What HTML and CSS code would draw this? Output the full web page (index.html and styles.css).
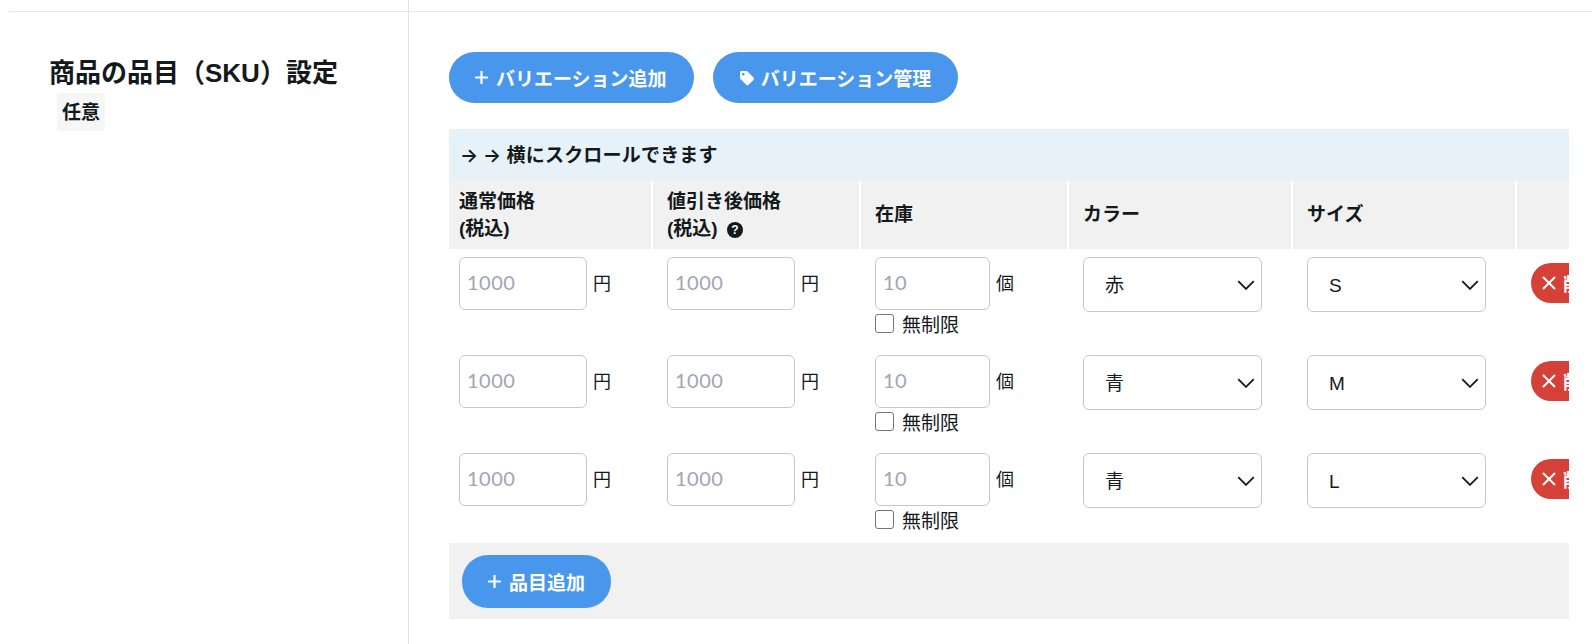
FILE: index.html
```html
<!DOCTYPE html>
<html lang="ja">
<head>
<meta charset="utf-8">
<title>商品の品目（SKU）設定</title>
<link rel="stylesheet" href="styles.css">
</head>
<body>
<div class="section section-prev"><div class="side"></div><div class="main"></div></div>
<section class="section">
  <div class="side">
    <h2 class="title">商品の品目（SKU）設定</h2>
    <span class="tag">任意</span>
  </div>
  <div class="main">
    <div class="actions">
      <button class="pill" type="button"><svg class="ico-plus" viewBox="0 0 12 12"><path d="M6 0v12M0 6h12"/></svg>バリエーション追加</button>
      <button class="pill" type="button"><svg class="ico-tag" viewBox="0 0 16 16"><path d="M1 2.4C1 1.6 1.6 1 2.4 1h4.9c.5 0 .9.2 1.2.5l6 6c.7.7.7 1.7 0 2.4l-4.9 4.900c-.7.7-1.700.7-2.400 0l-6-6C1.200 8.500 1 8.100 1 7.600zM4.300 3a1.300 1.300 0 1 0 0 2.600 1.300 1.300 0 0 0 0-2.600z"/></svg>バリエーション管理</button>
    </div>
    <div class="sku-box">
      <div class="hint"><span class="arrows">→ →</span> 横にスクロールできます</div>
      <div class="scroller">
        <table class="sku">
          <colgroup><col class="c1"><col class="c2"><col class="c3"><col class="c4"><col class="c5"><col class="c6"></colgroup>
          <thead>
            <tr>
              <th>通常価格<br>(税込)</th>
              <th>値引き後価格<br>(税込) <span class="q">?</span></th>
              <th class="single">在庫</th>
              <th class="single">カラー</th>
              <th class="single">サイズ</th>
              <th></th>
            </tr>
          </thead>
          <tbody>
            <tr>
              <td><div class="field"><input class="num" type="text" placeholder="1000"><span class="unit">円</span></div></td>
              <td><div class="field"><input class="num" type="text" placeholder="1000"><span class="unit">円</span></div></td>
              <td><div class="field"><input class="num stock" type="text" placeholder="10"><span class="unit">個</span></div><label class="check"><input type="checkbox">無制限</label></td>
              <td><div class="sel"><select><option>赤</option><option>青</option></select><svg viewBox="0 0 16 9"><path d="M1 1l7 7 7-7"/></svg></div></td>
              <td><div class="sel"><select><option>S</option><option>M</option><option>L</option></select><svg viewBox="0 0 16 9"><path d="M1 1l7 7 7-7"/></svg></div></td>
              <td><button class="del" type="button"><svg viewBox="0 0 14 14"><path d="M1 1l12 12M13 1L1 13"/></svg>削除</button></td>
            </tr>
            <tr>
              <td><div class="field"><input class="num" type="text" placeholder="1000"><span class="unit">円</span></div></td>
              <td><div class="field"><input class="num" type="text" placeholder="1000"><span class="unit">円</span></div></td>
              <td><div class="field"><input class="num stock" type="text" placeholder="10"><span class="unit">個</span></div><label class="check"><input type="checkbox">無制限</label></td>
              <td><div class="sel"><select><option>青</option><option>赤</option></select><svg viewBox="0 0 16 9"><path d="M1 1l7 7 7-7"/></svg></div></td>
              <td><div class="sel"><select><option>M</option><option>S</option><option>L</option></select><svg viewBox="0 0 16 9"><path d="M1 1l7 7 7-7"/></svg></div></td>
              <td><button class="del" type="button"><svg viewBox="0 0 14 14"><path d="M1 1l12 12M13 1L1 13"/></svg>削除</button></td>
            </tr>
            <tr>
              <td><div class="field"><input class="num" type="text" placeholder="1000"><span class="unit">円</span></div></td>
              <td><div class="field"><input class="num" type="text" placeholder="1000"><span class="unit">円</span></div></td>
              <td><div class="field"><input class="num stock" type="text" placeholder="10"><span class="unit">個</span></div><label class="check"><input type="checkbox">無制限</label></td>
              <td><div class="sel"><select><option>青</option><option>赤</option></select><svg viewBox="0 0 16 9"><path d="M1 1l7 7 7-7"/></svg></div></td>
              <td><div class="sel"><select><option>L</option><option>S</option><option>M</option></select><svg viewBox="0 0 16 9"><path d="M1 1l7 7 7-7"/></svg></div></td>
              <td><button class="del" type="button"><svg viewBox="0 0 14 14"><path d="M1 1l12 12M13 1L1 13"/></svg>削除</button></td>
            </tr>
          </tbody>
        </table>
      </div>
      <div class="foot"><button class="pill pill-add" type="button"><svg class="ico-plus" viewBox="0 0 12 12"><path d="M6 0v12M0 6h12"/></svg>品目追加</button></div>
    </div>
  </div>
</section>
</body>
</html>
```
FILE: styles.css
```css
* { box-sizing: border-box; }
html, body { margin: 0; height: 644px; overflow: hidden; background: #fff; }
body {
  font-family: "Liberation Sans", "Noto Sans CJK JP", sans-serif;
  color: #14191c;
  font-size: 17px;
}
.section { display: flex; margin-left: 9px; height: 632px; }
.section-prev { height: 12px; border-bottom: 1px solid #e6e6e6; }
.side { width: 400px; flex: none; border-right: 1px solid #e2e2e2; padding: 41px 0 0 40px; }
.main { flex: 1; min-width: 0; padding: 40px 23px 0 40px; }
.title { margin: 0; font-size: 26px; line-height: 40px; font-weight: 700; letter-spacing: 0; white-space: nowrap; }
.tag {
  display: inline-block;
  margin: 0 0 0 8px;
  padding: 1px 5px 0;
  height: 38px;
  line-height: 38px;
  background: #f6f6f6;
  font-size: 19px;
  font-weight: 700;
}
.actions { display: flex; gap: 19px; margin-bottom: 26px; }
.pill {
  display: inline-flex;
  align-items: center;
  height: 51px;
  padding: 0 27px 0 26px;
  border: 0;
  border-radius: 26px;
  background: #4897ec;
  color: #fff;
  font: 700 19px "Liberation Sans", "Noto Sans CJK JP", sans-serif;
  white-space: nowrap;
}
.ico-plus { width: 13px; height: 13px; margin-right: 8px; fill: none; stroke: #fff; stroke-width: 2; }
.ico-tag { width: 16px; height: 16px; margin-right: 6px; fill: #fff; fill-rule: evenodd; }
.sku-box { width: 1120px; }
.hint {
  height: 52px;
  padding: 1px 0 0 11px;
  line-height: 52px;
  background: #e7f2f8;
  font-size: 19px;
  font-weight: 700;
  letter-spacing: .2px;
}
.arrows { font-family: "Inter", sans-serif; font-size: 19px; font-weight: 600; letter-spacing: 0; }
.scroller { overflow: hidden; }
.sku { border-collapse: separate; border-spacing: 0; table-layout: fixed; width: 1200px; }
.c1 { width: 204px; }
.c2 { width: 208px; }
.c3 { width: 208px; }
.c4 { width: 224px; }
.c5 { width: 224px; }
.c6 { width: 132px; }
.sku th {
  height: 68px;
  padding: 0 10px 0 14px;
  background: #f1f1f1;
  border-right: 2px solid #fff;
  font-size: 19px;
  line-height: 27px;
  font-weight: 700;
  text-align: left;
}
.sku th:first-child { padding-left: 10px; }
.sku th.single { padding-bottom: 2px; }
.q {
  display: inline-block;
  width: 16px;
  height: 16px;
  margin-left: 4px;
  line-height: 16px;
  border-radius: 50%;
  background: #14191c;
  color: #fff;
  font-size: 12px;
  text-align: center;
  vertical-align: 1px;
}
.sku td { height: 98px; padding: 8px 10px 0 14px; vertical-align: top; }
.sku td:first-child { padding-left: 10px; }
.field { display: flex; align-items: center; gap: 6px; }
.num {
  width: 128px;
  height: 53px;
  padding: 0 7px 3px;
  border: 1px solid #c9c9c9;
  border-radius: 6px;
  background: #fff;
  font: 20px "Lato", sans-serif;
  letter-spacing: .5px;
}
.num::placeholder { color: #a0a6b2; opacity: 1; }
.stock { width: 115px; }
.unit { font-size: 18px; margin-top: -4px; }
.check { display: flex; align-items: center; gap: 8px; height: 27px; font-size: 19px; }
.check input {
  appearance: none;
  width: 19px;
  height: 19px;
  margin: 0;
  border: 1.500px solid #767676;
  border-radius: 3px;
  background: #fff;
}
.sel { position: relative; width: 179px; height: 55px; }
.sel select {
  appearance: none;
  width: 100%;
  height: 100%;
  padding: 2px 21px 0;
  border: 1px solid #c9c9c9;
  border-radius: 6px;
  background: #fff;
  color: #14191c;
  font: 19px "Liberation Sans", "Noto Sans CJK JP", sans-serif;
}
.sel svg {
  position: absolute;
  right: 7px;
  top: 23px;
  width: 18px;
  height: 10px;
  fill: none;
  stroke: #14191c;
  stroke-width: 1.600;
  pointer-events: none;
}
.del {
  display: inline-flex;
  align-items: center;
  height: 40px;
  margin: 6px 0 0 0;
  padding: 0 14px 0 11px;
  border: 0;
  border-radius: 20px;
  background: #d64137;
  color: #fff;
  font: 700 18px "Liberation Sans", "Noto Sans CJK JP", sans-serif;
  white-space: nowrap;
}
.del svg { width: 14px; height: 14px; margin-right: 7px; fill: none; stroke: #fff; stroke-width: 2; }
.foot { height: 76px; padding: 12px 13px 0; background: #f1f1f1; }
.pill-add { height: 53px; padding: 0 26px; }
```
